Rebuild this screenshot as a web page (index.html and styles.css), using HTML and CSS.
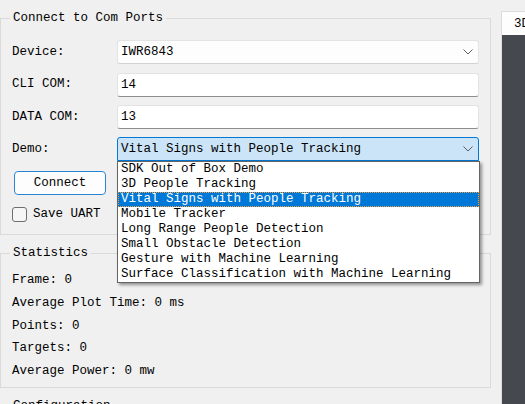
FILE: index.html
```html
<!DOCTYPE html>
<html>
<head>
<meta charset="utf-8">
<link rel="stylesheet" href="styles.css">
</head>
<body>
<div class="app">
  <div class="left">
    <fieldset class="group g-connect">
      <legend>Connect to Com Ports</legend>
      <div class="form">
        <label class="lbl">Device:</label>
        <div class="combo"><span class="val">IWR6843</span><svg class="chev" width="10" height="6" viewBox="0 0 10 6"><path d="M0.5 0.5 L5 5 L9.5 0.5" fill="none" stroke="#5f5f5f" stroke-width="1"/></svg></div>
        <label class="lbl">CLI COM:</label>
        <div class="edit">14</div>
        <label class="lbl">DATA COM:</label>
        <div class="edit">13</div>
        <label class="lbl lbl-demo">Demo:</label>
        <div class="combo open"><span class="val">Vital Signs with People Tracking</span><svg class="chev" width="10" height="6" viewBox="0 0 10 6"><path d="M0.5 0.5 L5 5 L9.5 0.5" fill="none" stroke="#5f5f5f" stroke-width="1"/></svg>
          <ul class="popup">
            <li>SDK Out of Box Demo</li>
            <li>3D People Tracking</li>
            <li class="sel">Vital Signs with People Tracking</li>
            <li>Mobile Tracker</li>
            <li>Long Range People Detection</li>
            <li>Small Obstacle Detection</li>
            <li>Gesture with Machine Learning</li>
            <li>Surface Classification with Machine Learning</li>
          </ul>
        </div>
      </div>
      <button class="btn">Connect</button>
      <div class="check"><span class="box"></span><span>Save UART</span></div>
    </fieldset>
    <fieldset class="group g-stats">
      <legend>Statistics</legend>
      <div class="stat">Frame: 0</div>
      <div class="stat">Average Plot Time: 0 ms</div>
      <div class="stat">Points: 0</div>
      <div class="stat">Targets: 0</div>
      <div class="stat">Average Power: 0 mw</div>
    </fieldset>
    <fieldset class="group g-config">
      <legend>Configuration</legend>
    </fieldset>
  </div>
  <div class="tabs">
    <div class="tabbar"><div class="tab">3D</div></div>
    <div class="pane"></div>
  </div>
</div>
</body>
</html>
```

FILE: styles.css
```css
html, body {
  margin: 0;
  padding: 0;
  background: #f0f0f0;
  height: 404px;
  overflow: hidden;
}
body {
  font-family: "Liberation Mono", monospace;
  font-size: 12.5px;
  color: #000;
}
.app {
  display: flex;
  align-items: flex-start;
  padding-top: 11px;
}
.left {
  width: 491px;
  flex: none;
  display: flex;
  flex-direction: column;
}
.group {
  margin: 0;
  padding: 0 11px 0 11px;
  border: 1px solid #dadada;
  min-width: 0;
}
.group legend {
  margin-left: -2px;
  padding: 0 3px;
  line-height: 15px;
  height: 15px;
}
.g-connect {
  padding-top: 14px;
  padding-bottom: 12px;
}
.form {
  display: grid;
  grid-template-columns: 105px 1fr;
  grid-auto-rows: 24px;
  row-gap: 8.7px;
  align-items: center;
}
.lbl {
  line-height: 15px;
}
.lbl-demo {
  margin-top: -2px;
}
.combo, .edit {
  box-sizing: border-box;
  height: 24px;
  line-height: 22px;
  padding-left: 3px;
  border: 1px solid #e3e3e3;
  border-radius: 3px;
  position: relative;
}
.combo {
  background: #fdfdfd;
  border-bottom-color: #d2d2d2;
  display: flex;
  align-items: center;
  justify-content: space-between;
  padding-right: 5px;
}
.combo .val {
  line-height: 22px;
}
.chev {
  display: block;
}
.edit {
  background: #fff;
  border-bottom-color: #8d8d8d;
}
.combo.open {
  background: #cce4f7;
  border-color: #0078d4;
  border-bottom-color: #0078d4;
  border-radius: 3px 3px 0 0;
  align-self: start;
  margin-top: -1px;
}
.popup {
  position: absolute;
  left: -1px;
  top: 23px;
  width: 363px;
  box-sizing: border-box;
  margin: 0;
  padding: 0;
  list-style: none;
  background: #fff;
  border: 1px solid #646464;
  box-shadow: 2px 2px 3px rgba(0, 0, 0, 0.4);
  z-index: 5;
}
.popup li {
  line-height: 15px;
  height: 15px;
  padding-left: 3px;
  white-space: nowrap;
}
.popup li.sel {
  background: #0078d7;
  color: #fff;
  outline: 1px dotted #f0a040;
  outline-offset: -1px;
}
.btn {
  display: block;
  margin: 9px 0 0 2px;
  width: 92px;
  height: 24px;
  box-sizing: border-box;
  background: #fdfdfd;
  border: 1px solid #2a84d6;
  border-radius: 4px;
  font-family: inherit;
  font-size: inherit;
  color: #000;
  padding: 0;
  line-height: 22px;
}
.check {
  display: flex;
  align-items: center;
  margin-top: 11px;
  height: 16px;
  line-height: 15px;
}
.check .box {
  width: 15px;
  height: 15px;
  box-sizing: border-box;
  border: 1px solid #6e6e6e;
  border-radius: 3px;
  background: #f6f6f6;
  margin-right: 6px;
}
.g-stats {
  margin-top: 11px;
  padding-top: 8px;
  padding-bottom: 4px;
}
.stat {
  line-height: 22.75px;
  height: 22.75px;
}
.g-config {
  margin-top: 11px;
  height: 40px;
}
.tabs {
  margin-left: 10px;
  flex: 1;
  display: flex;
  flex-direction: column;
  margin-top: 0;
}
.tabbar {
  display: flex;
}
.tab {
  box-sizing: border-box;
  height: 24px;
  width: 60px;
  background: #fdfdfd;
  border: 1px solid #dcdcdc;
  border-bottom: none;
  padding-left: 12px;
  line-height: 24px;
}
.pane {
  height: 380px;
  background: #46484f;
  border-left: 1px solid #dcdcdc;
}
```
